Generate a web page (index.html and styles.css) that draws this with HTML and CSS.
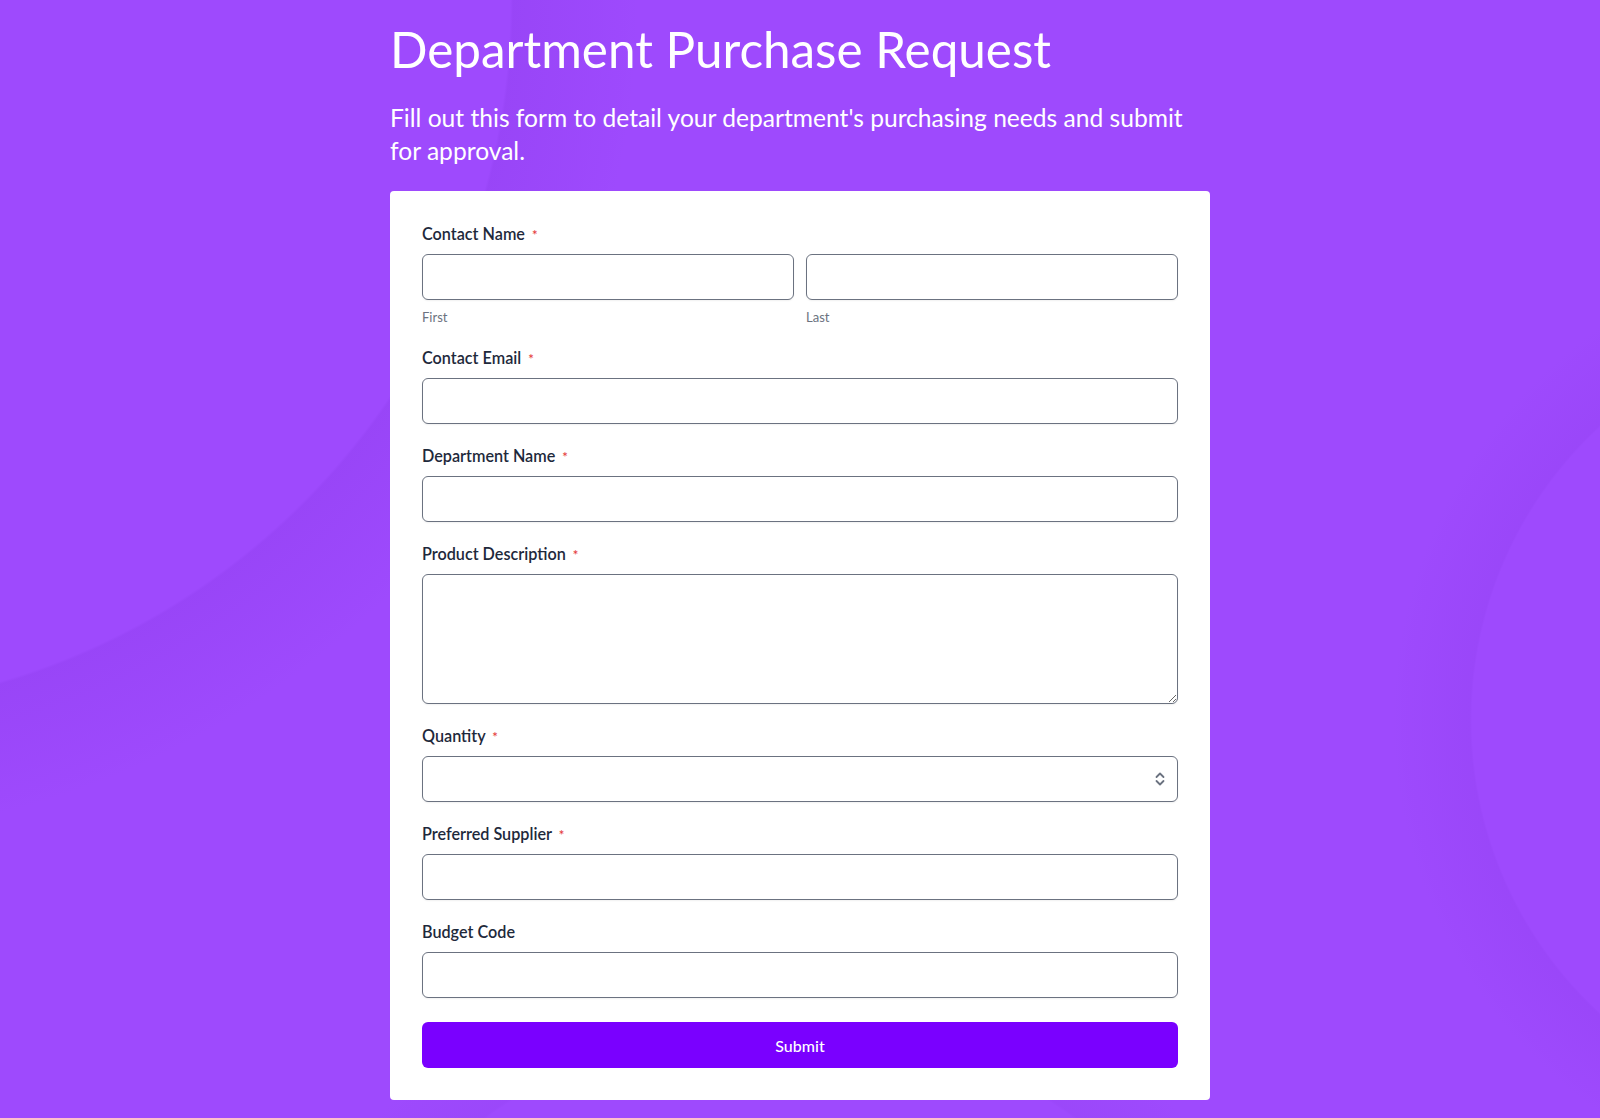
FILE: index.html
```html
<!DOCTYPE html>
<html lang="en">
<head>
    <meta charset="utf-8">
    <title>Department Purchase Request</title>
    <link rel="stylesheet" href="styles.css">
</head>
<body>
    <div class="page">
        <h1 class="titulo">Department Purchase Request</h1>
        <p class="descripcio">Fill out this form to detail your department's purchasing needs and submit for approval.</p>

        <form class="form-card">
            <div class="field">
                <label class="label">Contact Name <span class="req">*</span></label>
                <div class="name-row">
                    <div class="name-col">
                        <input type="text" class="input">
                        <span class="sublabel">First</span>
                    </div>
                    <div class="name-col">
                        <input type="text" class="input">
                        <span class="sublabel">Last</span>
                    </div>
                </div>
            </div>

            <div class="field">
                <label class="label">Contact Email <span class="req">*</span></label>
                <input type="email" class="input">
            </div>

            <div class="field">
                <label class="label">Department Name <span class="req">*</span></label>
                <input type="text" class="input">
            </div>

            <div class="field">
                <label class="label">Product Description <span class="req">*</span></label>
                <textarea class="input textarea"></textarea>
            </div>

            <div class="field">
                <label class="label">Quantity <span class="req">*</span></label>
                <div class="select-wrap">
                    <select class="input select">
                        <option></option>
                    </select>
                    <svg class="select-icon" width="12" height="18" viewBox="0 0 12 18">
                        <path d="M2.5 7 L6 3.5 L9.5 7" fill="none" stroke="#6b7280" stroke-width="1.8" stroke-linecap="round" stroke-linejoin="round"/>
                        <path d="M2.5 11 L6 14.5 L9.5 11" fill="none" stroke="#6b7280" stroke-width="1.8" stroke-linecap="round" stroke-linejoin="round"/>
                    </svg>
                </div>
            </div>

            <div class="field">
                <label class="label">Preferred Supplier <span class="req">*</span></label>
                <input type="text" class="input">
            </div>

            <div class="field">
                <label class="label">Budget Code</label>
                <input type="text" class="input">
            </div>

            <button type="button" class="submit">Submit</button>
        </form>
    </div>
</body>
</html>
```

FILE: styles.css
```css
html, body {
    margin: 0;
    padding: 0;
}

body {
    font-family: Lato, "Open Sans", sans-serif;
    min-height: 1118px;
    background-color: #9e4afd;
    /* cercles de fons, molt suaus */
    background-image:
        radial-gradient(circle 713px at -200px 0, rgba(0, 0, 0, 0) 99.6%, rgba(80, 10, 170, 0.07) 100%, rgba(80, 10, 170, 0) 118%),
        radial-gradient(circle 400px at 1870px 720px, rgba(0, 0, 0, 0) 99.5%, rgba(80, 10, 170, 0.05) 100%, rgba(80, 10, 170, 0) 120%),
        radial-gradient(circle 500px at 780px 1520px, rgba(0, 0, 0, 0) 99.5%, rgba(80, 10, 170, 0.04) 100%, rgba(80, 10, 170, 0) 115%);
    background-repeat: no-repeat;
    overflow: hidden;
}

.page {
    width: 820px;
    margin: 0 auto;
}

.titulo {
    margin: 20px 0 0 0;
    font-size: 49.4px;
    line-height: 58px;
    font-weight: 400;
    color: #ffffff;
}

.descripcio {
    margin: 23px 0 24px 0;
    font-size: 24.6px;
    line-height: 33px;
    color: #ffffff;
    padding-right: 10px;
}

.form-card {
    background-color: #ffffff;
    border-radius: 4px;
    padding: 31px 32px 32px 32px;
    display: flex;
    flex-direction: column;
}

.field {
    display: flex;
    flex-direction: column;
    margin-bottom: 20px;
}

.label {
    font-size: 16.2px;
    line-height: 24px;
    font-weight: 600;
    color: #1e293b;
    margin-bottom: 8px;
}

.req {
    color: #e53e3e;
    font-size: 13px;
    line-height: 1;
    margin-left: 3px;
}

.name-row {
    display: flex;
    gap: 12px;
}

.name-col {
    flex: 1;
    display: flex;
    flex-direction: column;
}

.sublabel {
    font-size: 13px;
    line-height: 18px;
    color: #6b7280;
    margin-top: 8px;
}

.input {
    box-sizing: border-box;
    width: 100%;
    height: 46px;
    border: 1px solid #6b7280;
    border-radius: 6px;
    background-color: #ffffff;
    box-shadow: 0 1px 2px rgba(0, 0, 0, 0.06);
    font-family: Lato, sans-serif;
    font-size: 16px;
    padding: 0 12px;
    margin: 0;
}

.textarea {
    height: 130px;
    padding: 10px 12px;
    resize: vertical;
    display: block;
}

.select-wrap {
    position: relative;
}

.select {
    appearance: none;
    -webkit-appearance: none;
    display: block;
}

.select-icon {
    position: absolute;
    right: 12px;
    top: 14px;
    pointer-events: none;
}

.submit {
    margin-top: 4px;
    height: 46px;
    border: none;
    border-radius: 6px;
    background-color: #7a00ff;
    color: #ffffff;
    font-family: Lato, sans-serif;
    font-size: 16px;
    font-weight: 500;
    cursor: pointer;
}
```
